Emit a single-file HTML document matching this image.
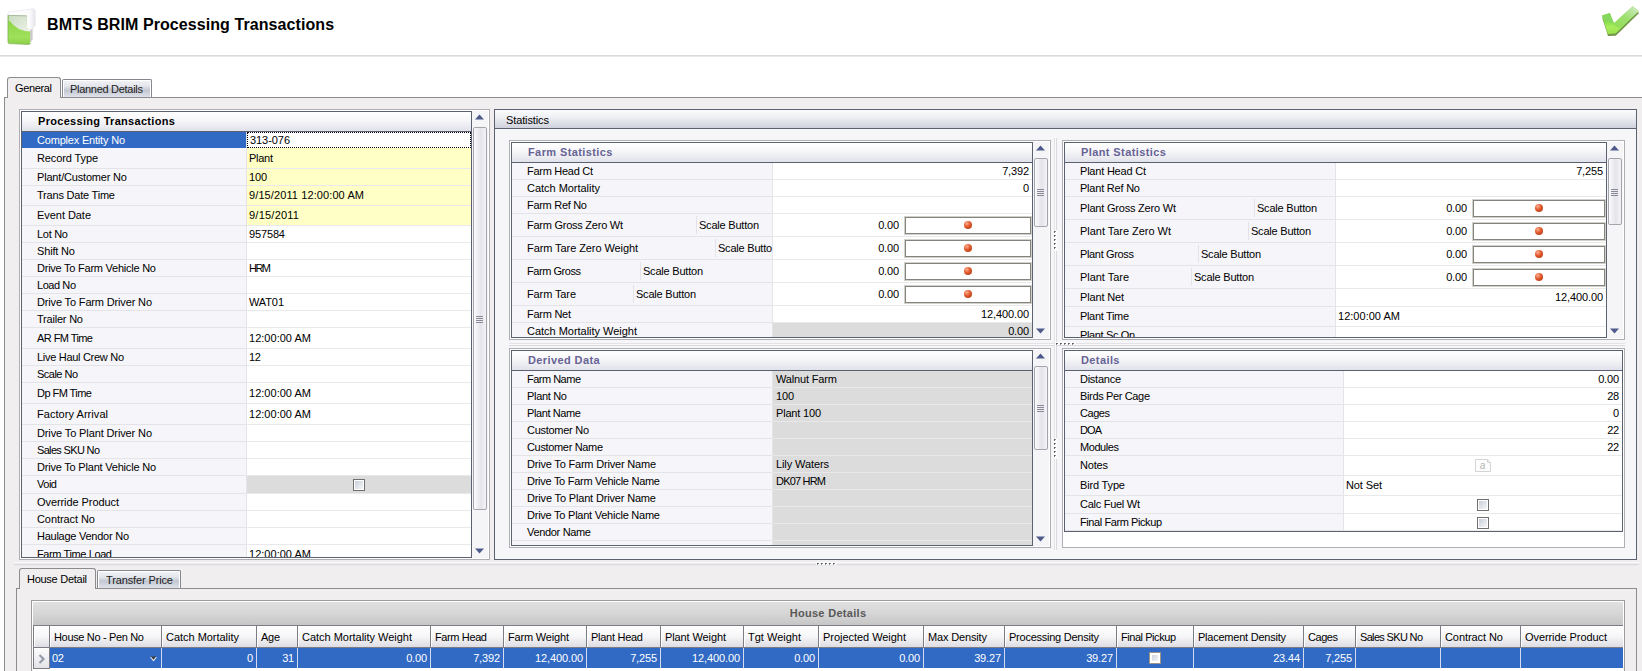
<!DOCTYPE html>
<html><head><meta charset="utf-8"><title>BMTS BRIM Processing Transactions</title>
<style>
html,body{margin:0;padding:0;background:#fff;}
body{width:1642px;height:671px;overflow:hidden;position:relative;font:11px "Liberation Sans",sans-serif;color:#000;}
div,svg{position:absolute;box-sizing:content-box;}
.t{white-space:nowrap;font:11px "Liberation Sans",sans-serif;letter-spacing:-0.2px;}
.b{font-weight:bold;}
</style></head><body>

<div class="t" style="left:47px;top:16px;height:22px;line-height:22px;font:bold 16px 'Liberation Sans',sans-serif;letter-spacing:0.08px">BMTS BRIM Processing Transactions</div>
<div style="left:0px;top:55px;width:1642px;height:1px;background:#dcdadc"></div>
<div style="left:0px;top:56px;width:1642px;height:1px;background:#ebeaeb"></div>
<svg style="left:0px;top:0px" width="50" height="52" viewBox="0 0 50 52">
<defs><linearGradient id="fg" x1="0" y1="0" x2="0" y2="1"><stop offset="0" stop-color="#86d23c"/><stop offset="0.75" stop-color="#9fe05c"/><stop offset="1" stop-color="#8ed048"/></linearGradient>
<linearGradient id="fgl" x1="0" y1="0" x2="1" y2="1"><stop offset="0" stop-color="#c9dcc0"/><stop offset="1" stop-color="#eef1ea"/></linearGradient>
<linearGradient id="fp" x1="0" y1="0" x2="1" y2="0"><stop offset="0" stop-color="#ffffff"/><stop offset="0.8" stop-color="#fbfbfc"/><stop offset="1" stop-color="#e6e4e8"/></linearGradient></defs>
<path d="M8 12.2 L32.5 8.8 Q35.2 8.8 35.2 11 L35.2 25.5 L32.8 28 L32.6 39.5 L30.5 42 L8 40 Z" fill="url(#fp)" stroke="#e9e7ec" stroke-width="0.8"/>
<path d="M30.2 30 L32.4 29 L32.3 39.6 L30.2 42.5 Z" fill="#c9c6cc"/>
<path d="M8 15.2 L26.8 15.8 L27 28 L30.2 31.4 L30.2 43 Q30.2 44.4 28.8 44.4 L9.3 43.6 Q8 43.5 8 42.2 Z" fill="url(#fg)"/>
<path d="M8.6 15.4 L26.8 15.9 L27 28 L30.2 31.6 Q16 30.5 10.2 21.2 L8.6 21 Z" fill="url(#fgl)"/>
<path d="M8 15.2 L8 42.2 Q8 43.5 9.3 43.6 L28.8 44.4 Q30.2 44.4 30.2 43" fill="none" stroke="#7fae55" stroke-width="0.9" opacity="0.8"/>
<path d="M8.2 15.3 L26.8 15.9" stroke="#aab0a6" stroke-width="0.8" fill="none"/>
</svg>
<svg style="left:1598px;top:4px" width="44" height="36" viewBox="0 0 44 36">
<defs><linearGradient id="cg" x1="0" y1="0" x2="0" y2="1"><stop offset="0" stop-color="#8fd95f"/><stop offset="0.55" stop-color="#86de48"/><stop offset="0.75" stop-color="#a8ee5c"/><stop offset="1" stop-color="#9be24c"/></linearGradient>
<linearGradient id="cg2" x1="1" y1="0" x2="0" y2="1"><stop offset="0" stop-color="#d4ecd0"/><stop offset="0.5" stop-color="#9fe070"/><stop offset="1" stop-color="#8fdc55"/></linearGradient></defs>
<path d="M4 11.6 L11.8 9.1 L15.9 19.2 L34.7 2.3 L40.9 7 L17.6 29.6 L9.8 29.9 Z" fill="#74954a" transform="translate(0.2,2.1)"/>
<path d="M4 11.6 L11.8 9.1 L15.9 19.2 L34.7 2.3 L40.9 7 L17.6 29.6 L9.8 29.9 Z" fill="url(#cg)"/>
<path d="M15.9 19.2 L34.7 2.3 L40.9 7 L22 24.5 Q18 23.5 15.9 19.2 Z" fill="url(#cg2)"/>
<path d="M4 11.6 L11.8 9.1 L15.9 19.2 Q9 19 5.2 15 Z" fill="#86d85c"/>
</svg>
<div style="left:4px;top:97px;width:1660px;height:600px;border:1px solid #8b8b90;background:#f0eeef;"></div>
<div style="left:7px;top:77px;width:52px;height:20px;border:1px solid #8b8b90;border-bottom:none;border-radius:3px 3px 0 0;background:#f0eeef;"></div>
<div class="t" style="left:15px;top:78px;height:20px;line-height:20px;letter-spacing:-0.357px;">General</div>
<div style="left:62px;top:79px;width:88px;height:17px;border:1px solid #85878f;border-bottom:none;border-radius:2px 2px 0 0;background:linear-gradient(#f2f3f6 0%,#e4e6ec 35%,#c3c7d2 60%,#dfe2e9 100%);box-shadow:inset 1px 1px 0 #fff,inset -1px 0 0 #fff;"></div>
<div class="t" style="left:70px;top:80px;height:18px;line-height:18px;letter-spacing:-0.290px;color:#222">Planned Details</div>
<div style="left:19px;top:109px;width:469px;height:449px;border:1px solid #aeaeb4;background:#fff;"></div>
<div style="left:21px;top:111px;width:449px;height:445px;border:1px solid #5b6171;overflow:hidden;background:#fff;">
<div style="left:0;top:0;width:449px;height:19px;background:linear-gradient(#ffffff 0%,#f6f6f9 45%,#e1e2ea 100%);border-bottom:1px solid #5b6171;"></div>
<div class="t b" style="left:16px;top:0;height:19px;line-height:19px;color:#000;letter-spacing:0.3px">Processing Transactions</div>
<div style="left:0;top:20px;width:224px;height:15px;background:#316ac5;border-bottom:1px solid #316ac5;"></div>
<div style="left:224px;top:20px;width:225px;height:15px;background:#fff;border-bottom:1px solid #e9e8eb;border-left:1px solid #e4e3e8;box-sizing:border-box;height:16px"></div>
<div class="t" style="left:15px;top:21px;height:15px;line-height:15px;color:#fff;letter-spacing:-0.193px;">Complex Entity No</div>
<div class="t" style="left:227px;top:21px;height:15px;line-height:15px;letter-spacing:-0.062px;">313-076</div>
<div style="left:225px;top:20px;width:222px;height:14px;border:1px dotted #000;background:#fff"></div>
<div class="t" style="left:228px;top:21px;height:15px;line-height:15px;letter-spacing:-0.062px;">313-076</div>
<div style="left:0;top:36px;width:224px;height:20px;background:#f6f5f9;border-bottom:1px solid #e4e3e8;"></div>
<div style="left:224px;top:36px;width:225px;height:20px;background:#ffffc6;border-bottom:1px solid #e9e8eb;border-left:1px solid #e4e3e8;box-sizing:border-box;height:21px"></div>
<div class="t" style="left:15px;top:36px;height:20px;line-height:20px;letter-spacing:-0.117px;">Record Type</div>
<div class="t" style="left:227px;top:36px;height:20px;line-height:20px;letter-spacing:-0.270px;">Plant</div>
<div style="left:0;top:57px;width:224px;height:16px;background:#f6f5f9;border-bottom:1px solid #e4e3e8;"></div>
<div style="left:224px;top:57px;width:225px;height:16px;background:#ffffc6;border-bottom:1px solid #e9e8eb;border-left:1px solid #e4e3e8;box-sizing:border-box;height:17px"></div>
<div class="t" style="left:15px;top:57px;height:16px;line-height:16px;letter-spacing:-0.184px;">Plant/Customer No</div>
<div class="t" style="left:227px;top:57px;height:16px;line-height:16px;letter-spacing:-0.180px;">100</div>
<div style="left:0;top:74px;width:224px;height:19px;background:#f6f5f9;border-bottom:1px solid #e4e3e8;"></div>
<div style="left:224px;top:74px;width:225px;height:19px;background:#ffffc6;border-bottom:1px solid #e9e8eb;border-left:1px solid #e4e3e8;box-sizing:border-box;height:20px"></div>
<div class="t" style="left:15px;top:74px;height:19px;line-height:19px;letter-spacing:-0.208px;">Trans Date Time</div>
<div class="t" style="left:227px;top:74px;height:19px;line-height:19px;letter-spacing:0.102px;">9/15/2011 12:00:00 AM</div>
<div style="left:0;top:94px;width:224px;height:19px;background:#f6f5f9;border-bottom:1px solid #e4e3e8;"></div>
<div style="left:224px;top:94px;width:225px;height:19px;background:#ffffc6;border-bottom:1px solid #e9e8eb;border-left:1px solid #e4e3e8;box-sizing:border-box;height:20px"></div>
<div class="t" style="left:15px;top:94px;height:19px;line-height:19px;letter-spacing:-0.047px;">Event Date</div>
<div class="t" style="left:227px;top:94px;height:19px;line-height:19px;letter-spacing:0.234px;">9/15/2011</div>
<div style="left:0;top:114px;width:224px;height:16px;background:#f6f5f9;border-bottom:1px solid #e4e3e8;"></div>
<div style="left:224px;top:114px;width:225px;height:16px;background:#fff;border-bottom:1px solid #e9e8eb;border-left:1px solid #e4e3e8;box-sizing:border-box;height:17px"></div>
<div class="t" style="left:15px;top:114px;height:16px;line-height:16px;letter-spacing:-0.284px;">Lot No</div>
<div class="t" style="left:227px;top:114px;height:16px;line-height:16px;letter-spacing:-0.144px;">957584</div>
<div style="left:0;top:131px;width:224px;height:16px;background:#f6f5f9;border-bottom:1px solid #e4e3e8;"></div>
<div style="left:224px;top:131px;width:225px;height:16px;background:#fff;border-bottom:1px solid #e9e8eb;border-left:1px solid #e4e3e8;box-sizing:border-box;height:17px"></div>
<div class="t" style="left:15px;top:131px;height:16px;line-height:16px;letter-spacing:-0.163px;">Shift No</div>
<div style="left:0;top:148px;width:224px;height:16px;background:#f6f5f9;border-bottom:1px solid #e4e3e8;"></div>
<div style="left:224px;top:148px;width:225px;height:16px;background:#fff;border-bottom:1px solid #e9e8eb;border-left:1px solid #e4e3e8;box-sizing:border-box;height:17px"></div>
<div class="t" style="left:15px;top:148px;height:16px;line-height:16px;letter-spacing:-0.240px;">Drive To Farm Vehicle No</div>
<div class="t" style="left:227px;top:148px;height:16px;line-height:16px;letter-spacing:-1.531px;">HRM</div>
<div style="left:0;top:165px;width:224px;height:16px;background:#f6f5f9;border-bottom:1px solid #e4e3e8;"></div>
<div style="left:224px;top:165px;width:225px;height:16px;background:#fff;border-bottom:1px solid #e9e8eb;border-left:1px solid #e4e3e8;box-sizing:border-box;height:17px"></div>
<div class="t" style="left:15px;top:165px;height:16px;line-height:16px;letter-spacing:-0.432px;">Load No</div>
<div style="left:0;top:182px;width:224px;height:16px;background:#f6f5f9;border-bottom:1px solid #e4e3e8;"></div>
<div style="left:224px;top:182px;width:225px;height:16px;background:#fff;border-bottom:1px solid #e9e8eb;border-left:1px solid #e4e3e8;box-sizing:border-box;height:17px"></div>
<div class="t" style="left:15px;top:182px;height:16px;line-height:16px;letter-spacing:-0.153px;">Drive To Farm Driver No</div>
<div class="t" style="left:227px;top:182px;height:16px;line-height:16px;letter-spacing:-0.113px;">WAT01</div>
<div style="left:0;top:199px;width:224px;height:16px;background:#f6f5f9;border-bottom:1px solid #e4e3e8;"></div>
<div style="left:224px;top:199px;width:225px;height:16px;background:#fff;border-bottom:1px solid #e9e8eb;border-left:1px solid #e4e3e8;box-sizing:border-box;height:17px"></div>
<div class="t" style="left:15px;top:199px;height:16px;line-height:16px;letter-spacing:-0.210px;">Trailer No</div>
<div style="left:0;top:216px;width:224px;height:20px;background:#f6f5f9;border-bottom:1px solid #e4e3e8;"></div>
<div style="left:224px;top:216px;width:225px;height:20px;background:#fff;border-bottom:1px solid #e9e8eb;border-left:1px solid #e4e3e8;box-sizing:border-box;height:21px"></div>
<div class="t" style="left:15px;top:216px;height:20px;line-height:20px;letter-spacing:-0.569px;">AR FM Time</div>
<div class="t" style="left:227px;top:216px;height:20px;line-height:20px;letter-spacing:0.022px;">12:00:00 AM</div>
<div style="left:0;top:237px;width:224px;height:16px;background:#f6f5f9;border-bottom:1px solid #e4e3e8;"></div>
<div style="left:224px;top:237px;width:225px;height:16px;background:#fff;border-bottom:1px solid #e9e8eb;border-left:1px solid #e4e3e8;box-sizing:border-box;height:17px"></div>
<div class="t" style="left:15px;top:237px;height:16px;line-height:16px;letter-spacing:-0.294px;">Live Haul Crew No</div>
<div class="t" style="left:227px;top:237px;height:16px;line-height:16px;letter-spacing:-0.250px;">12</div>
<div style="left:0;top:254px;width:224px;height:16px;background:#f6f5f9;border-bottom:1px solid #e4e3e8;"></div>
<div style="left:224px;top:254px;width:225px;height:16px;background:#fff;border-bottom:1px solid #e9e8eb;border-left:1px solid #e4e3e8;box-sizing:border-box;height:17px"></div>
<div class="t" style="left:15px;top:254px;height:16px;line-height:16px;letter-spacing:-0.520px;">Scale No</div>
<div style="left:0;top:271px;width:224px;height:20px;background:#f6f5f9;border-bottom:1px solid #e4e3e8;"></div>
<div style="left:224px;top:271px;width:225px;height:20px;background:#fff;border-bottom:1px solid #e9e8eb;border-left:1px solid #e4e3e8;box-sizing:border-box;height:21px"></div>
<div class="t" style="left:15px;top:271px;height:20px;line-height:20px;letter-spacing:-0.545px;">Dp FM Time</div>
<div class="t" style="left:227px;top:271px;height:20px;line-height:20px;letter-spacing:0.022px;">12:00:00 AM</div>
<div style="left:0;top:292px;width:224px;height:20px;background:#f6f5f9;border-bottom:1px solid #e4e3e8;"></div>
<div style="left:224px;top:292px;width:225px;height:20px;background:#fff;border-bottom:1px solid #e9e8eb;border-left:1px solid #e4e3e8;box-sizing:border-box;height:21px"></div>
<div class="t" style="left:15px;top:292px;height:20px;line-height:20px;letter-spacing:0.050px;">Factory Arrival</div>
<div class="t" style="left:227px;top:292px;height:20px;line-height:20px;letter-spacing:0.022px;">12:00:00 AM</div>
<div style="left:0;top:313px;width:224px;height:16px;background:#f6f5f9;border-bottom:1px solid #e4e3e8;"></div>
<div style="left:224px;top:313px;width:225px;height:16px;background:#fff;border-bottom:1px solid #e9e8eb;border-left:1px solid #e4e3e8;box-sizing:border-box;height:17px"></div>
<div class="t" style="left:15px;top:313px;height:16px;line-height:16px;letter-spacing:-0.121px;">Drive To Plant Driver No</div>
<div style="left:0;top:330px;width:224px;height:16px;background:#f6f5f9;border-bottom:1px solid #e4e3e8;"></div>
<div style="left:224px;top:330px;width:225px;height:16px;background:#fff;border-bottom:1px solid #e9e8eb;border-left:1px solid #e4e3e8;box-sizing:border-box;height:17px"></div>
<div class="t" style="left:15px;top:330px;height:16px;line-height:16px;letter-spacing:-0.665px;">Sales SKU No</div>
<div style="left:0;top:347px;width:224px;height:16px;background:#f6f5f9;border-bottom:1px solid #e4e3e8;"></div>
<div style="left:224px;top:347px;width:225px;height:16px;background:#fff;border-bottom:1px solid #e9e8eb;border-left:1px solid #e4e3e8;box-sizing:border-box;height:17px"></div>
<div class="t" style="left:15px;top:347px;height:16px;line-height:16px;letter-spacing:-0.205px;">Drive To Plant Vehicle No</div>
<div style="left:0;top:364px;width:224px;height:17px;background:#f6f5f9;border-bottom:1px solid #e4e3e8;"></div>
<div style="left:224px;top:364px;width:225px;height:17px;background:#dcdcdc;border-bottom:1px solid #e9e8eb;border-left:1px solid #e4e3e8;box-sizing:border-box;height:18px"></div>
<div class="t" style="left:15px;top:364px;height:17px;line-height:17px;letter-spacing:-0.474px;">Void</div>
<div style="left:331px;top:367px;width:10px;height:10px;border:1px solid #6f6f6f;background:linear-gradient(135deg,#c9ced9 10%,#f6f7f9 90%);box-shadow:inset 0 0 0 1px #fff;"></div>
<div style="left:0;top:382px;width:224px;height:16px;background:#f6f5f9;border-bottom:1px solid #e4e3e8;"></div>
<div style="left:224px;top:382px;width:225px;height:16px;background:#fff;border-bottom:1px solid #e9e8eb;border-left:1px solid #e4e3e8;box-sizing:border-box;height:17px"></div>
<div class="t" style="left:15px;top:382px;height:16px;line-height:16px;letter-spacing:-0.077px;">Override Product</div>
<div style="left:0;top:399px;width:224px;height:16px;background:#f6f5f9;border-bottom:1px solid #e4e3e8;"></div>
<div style="left:224px;top:399px;width:225px;height:16px;background:#fff;border-bottom:1px solid #e9e8eb;border-left:1px solid #e4e3e8;box-sizing:border-box;height:17px"></div>
<div class="t" style="left:15px;top:399px;height:16px;line-height:16px;letter-spacing:-0.070px;">Contract No</div>
<div style="left:0;top:416px;width:224px;height:16px;background:#f6f5f9;border-bottom:1px solid #e4e3e8;"></div>
<div style="left:224px;top:416px;width:225px;height:16px;background:#fff;border-bottom:1px solid #e9e8eb;border-left:1px solid #e4e3e8;box-sizing:border-box;height:17px"></div>
<div class="t" style="left:15px;top:416px;height:16px;line-height:16px;letter-spacing:-0.251px;">Haulage Vendor No</div>
<div style="left:0;top:433px;width:224px;height:19px;background:#f6f5f9;border-bottom:1px solid #e4e3e8;"></div>
<div style="left:224px;top:433px;width:225px;height:19px;background:#fff;border-bottom:1px solid #e9e8eb;border-left:1px solid #e4e3e8;box-sizing:border-box;height:20px"></div>
<div class="t" style="left:15px;top:433px;height:19px;line-height:19px;letter-spacing:-0.392px;">Farm Time Load</div>
<div class="t" style="left:227px;top:433px;height:19px;line-height:19px;letter-spacing:0.022px;">12:00:00 AM</div>
</div>
<div style="left:472px;top:111px;width:16px;height:447px;background:#f5f4f7;"></div>
<svg style="left:475px;top:114px" width="9" height="6" viewBox="0 0 9 6"><path d="M0 5.5 L4.5 0.6 L9 5.5 Z" fill="#4d5b8c"/></svg>
<svg style="left:475px;top:548px" width="9" height="6" viewBox="0 0 9 6"><path d="M0 0.5 L4.5 5.4 L9 0.5 Z" fill="#4d5b8c"/></svg>
<div style="left:473px;top:127px;width:12px;height:381px;border:1px solid #a4a4ac;border-radius:2px;background:linear-gradient(90deg,#fbfbfd 0%,#e4e4ea 55%,#f3f3f7 100%);"></div>
<div style="left:476px;top:316px;width:7px;height:1px;background:#8a8b98;"></div>
<div style="left:476px;top:318px;width:7px;height:1px;background:#8a8b98;"></div>
<div style="left:476px;top:320px;width:7px;height:1px;background:#8a8b98;"></div>
<div style="left:476px;top:322px;width:7px;height:1px;background:#8a8b98;"></div>
<div style="left:494px;top:109px;width:1141px;height:449px;border:1px solid #5b6171;background:#f6f5f8;"></div>
<div style="left:495px;top:110px;width:1141px;height:18px;background:linear-gradient(#fbfbfd 0%,#eff0f4 40%,#cfd2dc 100%);border-bottom:1px solid #5b6171;"></div>
<div class="t" style="left:506px;top:111px;height:18px;line-height:18px;letter-spacing:-0.113px;">Statistics</div>
<div style="left:509px;top:140px;width:540px;height:198px;border:1px solid #aeaeb4;background:#fff;"></div>
<div style="left:511px;top:142px;width:520px;height:194px;border:1px solid #5b6171;overflow:hidden;background:#fff;">
<div style="left:0;top:0;width:520px;height:19px;background:linear-gradient(#ffffff 0%,#f6f6f9 45%,#e1e2ea 100%);border-bottom:1px solid #5b6171;"></div>
<div class="t b" style="left:16px;top:0;height:19px;line-height:19px;color:#666394;letter-spacing:0.4px">Farm Statistics</div>
<div style="left:0;top:20px;width:260px;height:16px;background:#f6f5f9;border-bottom:1px solid #e4e3e8;"></div>
<div style="left:260px;top:20px;width:260px;height:16px;background:#fff;border-bottom:1px solid #e9e8eb;border-left:1px solid #e4e3e8;box-sizing:border-box;height:17px"></div>
<div class="t" style="left:15px;top:20px;height:16px;line-height:16px;letter-spacing:-0.280px;">Farm Head Ct</div>
<div class="t" style="right:3px;top:20px;height:16px;line-height:16px;letter-spacing:-0.133px;">7,392</div>
<div style="left:0;top:37px;width:260px;height:16px;background:#f6f5f9;border-bottom:1px solid #e4e3e8;"></div>
<div style="left:260px;top:37px;width:260px;height:16px;background:#fff;border-bottom:1px solid #e9e8eb;border-left:1px solid #e4e3e8;box-sizing:border-box;height:17px"></div>
<div class="t" style="left:15px;top:37px;height:16px;line-height:16px;letter-spacing:-0.026px;">Catch Mortality</div>
<div class="t" style="right:3px;top:37px;height:16px;line-height:16px;letter-spacing:0;">0</div>
<div style="left:0;top:54px;width:260px;height:16px;background:#f6f5f9;border-bottom:1px solid #e4e3e8;"></div>
<div style="left:260px;top:54px;width:260px;height:16px;background:#fff;border-bottom:1px solid #e9e8eb;border-left:1px solid #e4e3e8;box-sizing:border-box;height:17px"></div>
<div class="t" style="left:15px;top:54px;height:16px;line-height:16px;letter-spacing:-0.297px;">Farm Ref No</div>
<div style="left:0;top:71px;width:260px;height:22px;background:#f6f5f9;border-bottom:1px solid #e4e3e8;"></div>
<div style="left:260px;top:71px;width:260px;height:22px;background:#fff;border-bottom:1px solid #e9e8eb;border-left:1px solid #e4e3e8;box-sizing:border-box;height:23px"></div>
<div class="t" style="left:15px;top:71px;height:22px;line-height:22px;letter-spacing:-0.249px;">Farm Gross Zero Wt</div>
<div style="left:184px;top:73px;width:1px;height:18px;background:#e4e3e8"></div>
<div class="t" style="left:187px;top:71px;height:22px;line-height:22px;width:73px;overflow:hidden;white-space:nowrap;letter-spacing:-0.216px;">Scale Button</div>
<div class="t" style="left:347px;width:40px;text-align:right;top:71px;height:22px;line-height:22px;letter-spacing:-0.141px;">0.00</div>
<div style="left:392px;top:73px;width:124px;height:15px;border:1px solid #d3d1cc;padding:1px;margin:0;background:#fff;box-shadow:inset 0 0 0 1px #85837e"></div>
<div style="left:452px;top:78px;width:8px;height:8px;border-radius:50%;background:radial-gradient(circle at 35% 30%,#ffb090 0%,#e0562a 45%,#a63a16 100%);"></div>
<div style="left:0;top:94px;width:260px;height:22px;background:#f6f5f9;border-bottom:1px solid #e4e3e8;"></div>
<div style="left:260px;top:94px;width:260px;height:22px;background:#fff;border-bottom:1px solid #e9e8eb;border-left:1px solid #e4e3e8;box-sizing:border-box;height:23px"></div>
<div class="t" style="left:15px;top:94px;height:22px;line-height:22px;letter-spacing:-0.084px;">Farm Tare Zero Weight</div>
<div style="left:203px;top:96px;width:1px;height:18px;background:#e4e3e8"></div>
<div class="t" style="left:206px;top:94px;height:22px;line-height:22px;width:54px;overflow:hidden;white-space:nowrap;letter-spacing:-0.216px;">Scale Button</div>
<div class="t" style="left:347px;width:40px;text-align:right;top:94px;height:22px;line-height:22px;letter-spacing:-0.141px;">0.00</div>
<div style="left:392px;top:96px;width:124px;height:15px;border:1px solid #d3d1cc;padding:1px;margin:0;background:#fff;box-shadow:inset 0 0 0 1px #85837e"></div>
<div style="left:452px;top:101px;width:8px;height:8px;border-radius:50%;background:radial-gradient(circle at 35% 30%,#ffb090 0%,#e0562a 45%,#a63a16 100%);"></div>
<div style="left:0;top:117px;width:260px;height:22px;background:#f6f5f9;border-bottom:1px solid #e4e3e8;"></div>
<div style="left:260px;top:117px;width:260px;height:22px;background:#fff;border-bottom:1px solid #e9e8eb;border-left:1px solid #e4e3e8;box-sizing:border-box;height:23px"></div>
<div class="t" style="left:15px;top:117px;height:22px;line-height:22px;letter-spacing:-0.451px;">Farm Gross</div>
<div style="left:128px;top:119px;width:1px;height:18px;background:#e4e3e8"></div>
<div class="t" style="left:131px;top:117px;height:22px;line-height:22px;width:129px;overflow:hidden;white-space:nowrap;letter-spacing:-0.216px;">Scale Button</div>
<div class="t" style="left:347px;width:40px;text-align:right;top:117px;height:22px;line-height:22px;letter-spacing:-0.141px;">0.00</div>
<div style="left:392px;top:119px;width:124px;height:15px;border:1px solid #d3d1cc;padding:1px;margin:0;background:#fff;box-shadow:inset 0 0 0 1px #85837e"></div>
<div style="left:452px;top:124px;width:8px;height:8px;border-radius:50%;background:radial-gradient(circle at 35% 30%,#ffb090 0%,#e0562a 45%,#a63a16 100%);"></div>
<div style="left:0;top:140px;width:260px;height:22px;background:#f6f5f9;border-bottom:1px solid #e4e3e8;"></div>
<div style="left:260px;top:140px;width:260px;height:22px;background:#fff;border-bottom:1px solid #e9e8eb;border-left:1px solid #e4e3e8;box-sizing:border-box;height:23px"></div>
<div class="t" style="left:15px;top:140px;height:22px;line-height:22px;letter-spacing:-0.115px;">Farm Tare</div>
<div style="left:121px;top:142px;width:1px;height:18px;background:#e4e3e8"></div>
<div class="t" style="left:124px;top:140px;height:22px;line-height:22px;width:136px;overflow:hidden;white-space:nowrap;letter-spacing:-0.216px;">Scale Button</div>
<div class="t" style="left:347px;width:40px;text-align:right;top:140px;height:22px;line-height:22px;letter-spacing:-0.141px;">0.00</div>
<div style="left:392px;top:142px;width:124px;height:15px;border:1px solid #d3d1cc;padding:1px;margin:0;background:#fff;box-shadow:inset 0 0 0 1px #85837e"></div>
<div style="left:452px;top:147px;width:8px;height:8px;border-radius:50%;background:radial-gradient(circle at 35% 30%,#ffb090 0%,#e0562a 45%,#a63a16 100%);"></div>
<div style="left:0;top:163px;width:260px;height:16px;background:#f6f5f9;border-bottom:1px solid #e4e3e8;"></div>
<div style="left:260px;top:163px;width:260px;height:16px;background:#fff;border-bottom:1px solid #e9e8eb;border-left:1px solid #e4e3e8;box-sizing:border-box;height:17px"></div>
<div class="t" style="left:15px;top:163px;height:16px;line-height:16px;letter-spacing:-0.263px;">Farm Net</div>
<div class="t" style="right:3px;top:163px;height:16px;line-height:16px;letter-spacing:-0.117px;">12,400.00</div>
<div style="left:0;top:180px;width:260px;height:16px;background:#f6f5f9;border-bottom:1px solid #e4e3e8;"></div>
<div style="left:260px;top:180px;width:260px;height:16px;background:#dcdcdc;border-bottom:1px solid #e9e8eb;border-left:1px solid #e4e3e8;box-sizing:border-box;height:17px"></div>
<div class="t" style="left:15px;top:180px;height:16px;line-height:16px;letter-spacing:-0.022px;">Catch Mortality Weight</div>
<div class="t" style="right:3px;top:180px;height:16px;line-height:16px;letter-spacing:-0.141px;">0.00</div>
</div>
<div style="left:1033px;top:142px;width:16px;height:196px;background:#f5f4f7;"></div>
<svg style="left:1036px;top:145px" width="9" height="6" viewBox="0 0 9 6"><path d="M0 5.5 L4.5 0.6 L9 5.5 Z" fill="#4d5b8c"/></svg>
<svg style="left:1036px;top:328px" width="9" height="6" viewBox="0 0 9 6"><path d="M0 0.5 L4.5 5.4 L9 0.5 Z" fill="#4d5b8c"/></svg>
<div style="left:1034px;top:158px;width:12px;height:67px;border:1px solid #a4a4ac;border-radius:2px;background:linear-gradient(90deg,#fbfbfd 0%,#e4e4ea 55%,#f3f3f7 100%);"></div>
<div style="left:1037px;top:189px;width:7px;height:1px;background:#8a8b98;"></div>
<div style="left:1037px;top:191px;width:7px;height:1px;background:#8a8b98;"></div>
<div style="left:1037px;top:193px;width:7px;height:1px;background:#8a8b98;"></div>
<div style="left:1037px;top:195px;width:7px;height:1px;background:#8a8b98;"></div>
<div style="left:1062px;top:140px;width:561px;height:198px;border:1px solid #aeaeb4;background:#fff;"></div>
<div style="left:1064px;top:142px;width:541px;height:194px;border:1px solid #5b6171;overflow:hidden;background:#fff;">
<div style="left:0;top:0;width:541px;height:19px;background:linear-gradient(#ffffff 0%,#f6f6f9 45%,#e1e2ea 100%);border-bottom:1px solid #5b6171;"></div>
<div class="t b" style="left:16px;top:0;height:19px;line-height:19px;color:#666394;letter-spacing:0.4px">Plant Statistics</div>
<div style="left:0;top:20px;width:270px;height:16px;background:#f6f5f9;border-bottom:1px solid #e4e3e8;"></div>
<div style="left:270px;top:20px;width:271px;height:16px;background:#fff;border-bottom:1px solid #e9e8eb;border-left:1px solid #e4e3e8;box-sizing:border-box;height:17px"></div>
<div class="t" style="left:15px;top:20px;height:16px;line-height:16px;letter-spacing:-0.207px;">Plant Head Ct</div>
<div class="t" style="right:3px;top:20px;height:16px;line-height:16px;letter-spacing:-0.133px;">7,255</div>
<div style="left:0;top:37px;width:270px;height:16px;background:#f6f5f9;border-bottom:1px solid #e4e3e8;"></div>
<div style="left:270px;top:37px;width:271px;height:16px;background:#fff;border-bottom:1px solid #e9e8eb;border-left:1px solid #e4e3e8;box-sizing:border-box;height:17px"></div>
<div class="t" style="left:15px;top:37px;height:16px;line-height:16px;letter-spacing:-0.216px;">Plant Ref No</div>
<div style="left:0;top:54px;width:270px;height:22px;background:#f6f5f9;border-bottom:1px solid #e4e3e8;"></div>
<div style="left:270px;top:54px;width:271px;height:22px;background:#fff;border-bottom:1px solid #e9e8eb;border-left:1px solid #e4e3e8;box-sizing:border-box;height:23px"></div>
<div class="t" style="left:15px;top:54px;height:22px;line-height:22px;letter-spacing:-0.202px;">Plant Gross Zero Wt</div>
<div style="left:189px;top:56px;width:1px;height:18px;background:#e4e3e8"></div>
<div class="t" style="left:192px;top:54px;height:22px;line-height:22px;width:78px;overflow:hidden;white-space:nowrap;letter-spacing:-0.216px;">Scale Button</div>
<div class="t" style="left:362px;width:40px;text-align:right;top:54px;height:22px;line-height:22px;letter-spacing:-0.141px;">0.00</div>
<div style="left:407px;top:56px;width:130px;height:15px;border:1px solid #d3d1cc;padding:1px;margin:0;background:#fff;box-shadow:inset 0 0 0 1px #85837e"></div>
<div style="left:470px;top:61px;width:8px;height:8px;border-radius:50%;background:radial-gradient(circle at 35% 30%,#ffb090 0%,#e0562a 45%,#a63a16 100%);"></div>
<div style="left:0;top:77px;width:270px;height:22px;background:#f6f5f9;border-bottom:1px solid #e4e3e8;"></div>
<div style="left:270px;top:77px;width:271px;height:22px;background:#fff;border-bottom:1px solid #e9e8eb;border-left:1px solid #e4e3e8;box-sizing:border-box;height:23px"></div>
<div class="t" style="left:15px;top:77px;height:22px;line-height:22px;letter-spacing:-0.029px;">Plant Tare Zero Wt</div>
<div style="left:183px;top:79px;width:1px;height:18px;background:#e4e3e8"></div>
<div class="t" style="left:186px;top:77px;height:22px;line-height:22px;width:84px;overflow:hidden;white-space:nowrap;letter-spacing:-0.216px;">Scale Button</div>
<div class="t" style="left:362px;width:40px;text-align:right;top:77px;height:22px;line-height:22px;letter-spacing:-0.141px;">0.00</div>
<div style="left:407px;top:79px;width:130px;height:15px;border:1px solid #d3d1cc;padding:1px;margin:0;background:#fff;box-shadow:inset 0 0 0 1px #85837e"></div>
<div style="left:470px;top:84px;width:8px;height:8px;border-radius:50%;background:radial-gradient(circle at 35% 30%,#ffb090 0%,#e0562a 45%,#a63a16 100%);"></div>
<div style="left:0;top:100px;width:270px;height:22px;background:#f6f5f9;border-bottom:1px solid #e4e3e8;"></div>
<div style="left:270px;top:100px;width:271px;height:22px;background:#fff;border-bottom:1px solid #e9e8eb;border-left:1px solid #e4e3e8;box-sizing:border-box;height:23px"></div>
<div class="t" style="left:15px;top:100px;height:22px;line-height:22px;letter-spacing:-0.347px;">Plant Gross</div>
<div style="left:133px;top:102px;width:1px;height:18px;background:#e4e3e8"></div>
<div class="t" style="left:136px;top:100px;height:22px;line-height:22px;width:134px;overflow:hidden;white-space:nowrap;letter-spacing:-0.216px;">Scale Button</div>
<div class="t" style="left:362px;width:40px;text-align:right;top:100px;height:22px;line-height:22px;letter-spacing:-0.141px;">0.00</div>
<div style="left:407px;top:102px;width:130px;height:15px;border:1px solid #d3d1cc;padding:1px;margin:0;background:#fff;box-shadow:inset 0 0 0 1px #85837e"></div>
<div style="left:470px;top:107px;width:8px;height:8px;border-radius:50%;background:radial-gradient(circle at 35% 30%,#ffb090 0%,#e0562a 45%,#a63a16 100%);"></div>
<div style="left:0;top:123px;width:270px;height:22px;background:#f6f5f9;border-bottom:1px solid #e4e3e8;"></div>
<div style="left:270px;top:123px;width:271px;height:22px;background:#fff;border-bottom:1px solid #e9e8eb;border-left:1px solid #e4e3e8;box-sizing:border-box;height:23px"></div>
<div class="t" style="left:15px;top:123px;height:22px;line-height:22px;letter-spacing:-0.036px;">Plant Tare</div>
<div style="left:126px;top:125px;width:1px;height:18px;background:#e4e3e8"></div>
<div class="t" style="left:129px;top:123px;height:22px;line-height:22px;width:141px;overflow:hidden;white-space:nowrap;letter-spacing:-0.216px;">Scale Button</div>
<div class="t" style="left:362px;width:40px;text-align:right;top:123px;height:22px;line-height:22px;letter-spacing:-0.141px;">0.00</div>
<div style="left:407px;top:125px;width:130px;height:15px;border:1px solid #d3d1cc;padding:1px;margin:0;background:#fff;box-shadow:inset 0 0 0 1px #85837e"></div>
<div style="left:470px;top:130px;width:8px;height:8px;border-radius:50%;background:radial-gradient(circle at 35% 30%,#ffb090 0%,#e0562a 45%,#a63a16 100%);"></div>
<div style="left:0;top:146px;width:270px;height:17px;background:#f6f5f9;border-bottom:1px solid #e4e3e8;"></div>
<div style="left:270px;top:146px;width:271px;height:17px;background:#fff;border-bottom:1px solid #e9e8eb;border-left:1px solid #e4e3e8;box-sizing:border-box;height:18px"></div>
<div class="t" style="left:15px;top:146px;height:17px;line-height:17px;letter-spacing:-0.156px;">Plant Net</div>
<div class="t" style="right:3px;top:146px;height:17px;line-height:17px;letter-spacing:-0.117px;">12,400.00</div>
<div style="left:0;top:164px;width:270px;height:19px;background:#f6f5f9;border-bottom:1px solid #e4e3e8;"></div>
<div style="left:270px;top:164px;width:271px;height:19px;background:#fff;border-bottom:1px solid #e9e8eb;border-left:1px solid #e4e3e8;box-sizing:border-box;height:20px"></div>
<div class="t" style="left:15px;top:164px;height:19px;line-height:19px;letter-spacing:-0.330px;">Plant Time</div>
<div class="t" style="left:273px;top:164px;height:19px;line-height:19px;letter-spacing:0.022px;">12:00:00 AM</div>
<div style="left:0;top:184px;width:270px;height:17px;background:#f6f5f9;border-bottom:1px solid #e4e3e8;"></div>
<div style="left:270px;top:184px;width:271px;height:17px;background:#fff;border-bottom:1px solid #e9e8eb;border-left:1px solid #e4e3e8;box-sizing:border-box;height:18px"></div>
<div class="t" style="left:15px;top:184px;height:17px;line-height:17px;letter-spacing:-0.370px;">Plant Sc On</div>
</div>
<div style="left:1607px;top:142px;width:16px;height:196px;background:#f5f4f7;"></div>
<svg style="left:1610px;top:145px" width="9" height="6" viewBox="0 0 9 6"><path d="M0 5.5 L4.5 0.6 L9 5.5 Z" fill="#4d5b8c"/></svg>
<svg style="left:1610px;top:328px" width="9" height="6" viewBox="0 0 9 6"><path d="M0 0.5 L4.5 5.4 L9 0.5 Z" fill="#4d5b8c"/></svg>
<div style="left:1608px;top:158px;width:12px;height:65px;border:1px solid #a4a4ac;border-radius:2px;background:linear-gradient(90deg,#fbfbfd 0%,#e4e4ea 55%,#f3f3f7 100%);"></div>
<div style="left:1611px;top:189px;width:7px;height:1px;background:#8a8b98;"></div>
<div style="left:1611px;top:191px;width:7px;height:1px;background:#8a8b98;"></div>
<div style="left:1611px;top:193px;width:7px;height:1px;background:#8a8b98;"></div>
<div style="left:1611px;top:195px;width:7px;height:1px;background:#8a8b98;"></div>
<div style="left:509px;top:348px;width:540px;height:198px;border:1px solid #aeaeb4;background:#fff;"></div>
<div style="left:511px;top:350px;width:520px;height:194px;border:1px solid #5b6171;overflow:hidden;background:#fff;">
<div style="left:0;top:0;width:520px;height:19px;background:linear-gradient(#ffffff 0%,#f6f6f9 45%,#e1e2ea 100%);border-bottom:1px solid #5b6171;"></div>
<div class="t b" style="left:16px;top:0;height:19px;line-height:19px;color:#666394;letter-spacing:0.4px">Derived Data</div>
<div style="left:0;top:20px;width:260px;height:16px;background:#f6f5f9;border-bottom:1px solid #e4e3e8;"></div>
<div style="left:260px;top:20px;width:260px;height:16px;background:#dcdcdc;border-bottom:1px solid #e8e8ea;border-left:1px solid #e4e3e8;box-sizing:border-box;height:17px"></div>
<div class="t" style="left:15px;top:20px;height:16px;line-height:16px;letter-spacing:-0.508px;">Farm Name</div>
<div class="t" style="left:264px;top:20px;height:16px;line-height:16px;letter-spacing:-0.155px;">Walnut Farm</div>
<div style="left:0;top:37px;width:260px;height:16px;background:#f6f5f9;border-bottom:1px solid #e4e3e8;"></div>
<div style="left:260px;top:37px;width:260px;height:16px;background:#dcdcdc;border-bottom:1px solid #e8e8ea;border-left:1px solid #e4e3e8;box-sizing:border-box;height:17px"></div>
<div class="t" style="left:15px;top:37px;height:16px;line-height:16px;letter-spacing:-0.315px;">Plant No</div>
<div class="t" style="left:264px;top:37px;height:16px;line-height:16px;letter-spacing:-0.180px;">100</div>
<div style="left:0;top:54px;width:260px;height:16px;background:#f6f5f9;border-bottom:1px solid #e4e3e8;"></div>
<div style="left:260px;top:54px;width:260px;height:16px;background:#dcdcdc;border-bottom:1px solid #e8e8ea;border-left:1px solid #e4e3e8;box-sizing:border-box;height:17px"></div>
<div class="t" style="left:15px;top:54px;height:16px;line-height:16px;letter-spacing:-0.387px;">Plant Name</div>
<div class="t" style="left:264px;top:54px;height:16px;line-height:16px;letter-spacing:-0.186px;">Plant 100</div>
<div style="left:0;top:71px;width:260px;height:16px;background:#f6f5f9;border-bottom:1px solid #e4e3e8;"></div>
<div style="left:260px;top:71px;width:260px;height:16px;background:#dcdcdc;border-bottom:1px solid #e8e8ea;border-left:1px solid #e4e3e8;box-sizing:border-box;height:17px"></div>
<div class="t" style="left:15px;top:71px;height:16px;line-height:16px;letter-spacing:-0.280px;">Customer No</div>
<div style="left:0;top:88px;width:260px;height:16px;background:#f6f5f9;border-bottom:1px solid #e4e3e8;"></div>
<div style="left:260px;top:88px;width:260px;height:16px;background:#dcdcdc;border-bottom:1px solid #e8e8ea;border-left:1px solid #e4e3e8;box-sizing:border-box;height:17px"></div>
<div class="t" style="left:15px;top:88px;height:16px;line-height:16px;letter-spacing:-0.340px;">Customer Name</div>
<div style="left:0;top:105px;width:260px;height:16px;background:#f6f5f9;border-bottom:1px solid #e4e3e8;"></div>
<div style="left:260px;top:105px;width:260px;height:16px;background:#dcdcdc;border-bottom:1px solid #e8e8ea;border-left:1px solid #e4e3e8;box-sizing:border-box;height:17px"></div>
<div class="t" style="left:15px;top:105px;height:16px;line-height:16px;letter-spacing:-0.194px;">Drive To Farm Driver Name</div>
<div class="t" style="left:264px;top:105px;height:16px;line-height:16px;letter-spacing:-0.100px;">Lily Waters</div>
<div style="left:0;top:122px;width:260px;height:16px;background:#f6f5f9;border-bottom:1px solid #e4e3e8;"></div>
<div style="left:260px;top:122px;width:260px;height:16px;background:#dcdcdc;border-bottom:1px solid #e8e8ea;border-left:1px solid #e4e3e8;box-sizing:border-box;height:17px"></div>
<div class="t" style="left:15px;top:122px;height:16px;line-height:16px;letter-spacing:-0.272px;">Drive To Farm Vehicle Name</div>
<div class="t" style="left:264px;top:122px;height:16px;line-height:16px;letter-spacing:-0.804px;">DK07 HRM</div>
<div style="left:0;top:139px;width:260px;height:16px;background:#f6f5f9;border-bottom:1px solid #e4e3e8;"></div>
<div style="left:260px;top:139px;width:260px;height:16px;background:#dcdcdc;border-bottom:1px solid #e8e8ea;border-left:1px solid #e4e3e8;box-sizing:border-box;height:17px"></div>
<div class="t" style="left:15px;top:139px;height:16px;line-height:16px;letter-spacing:-0.163px;">Drive To Plant Driver Name</div>
<div style="left:0;top:156px;width:260px;height:16px;background:#f6f5f9;border-bottom:1px solid #e4e3e8;"></div>
<div style="left:260px;top:156px;width:260px;height:16px;background:#dcdcdc;border-bottom:1px solid #e8e8ea;border-left:1px solid #e4e3e8;box-sizing:border-box;height:17px"></div>
<div class="t" style="left:15px;top:156px;height:16px;line-height:16px;letter-spacing:-0.239px;">Drive To Plant Vehicle Name</div>
<div style="left:0;top:173px;width:260px;height:16px;background:#f6f5f9;border-bottom:1px solid #e4e3e8;"></div>
<div style="left:260px;top:173px;width:260px;height:16px;background:#dcdcdc;border-bottom:1px solid #e8e8ea;border-left:1px solid #e4e3e8;box-sizing:border-box;height:17px"></div>
<div class="t" style="left:15px;top:173px;height:16px;line-height:16px;letter-spacing:-0.327px;">Vendor Name</div>
<div style="left:0;top:190px;width:260px;height:16px;background:#f6f5f9;border-bottom:1px solid #e4e3e8;"></div>
<div style="left:260px;top:190px;width:260px;height:16px;background:#dcdcdc;border-bottom:1px solid #e8e8ea;border-left:1px solid #e4e3e8;box-sizing:border-box;height:17px"></div>
<div class="t" style="left:15px;top:190px;height:16px;line-height:16px;letter-spacing:0;"></div>
</div>
<div style="left:1033px;top:350px;width:16px;height:196px;background:#f5f4f7;"></div>
<svg style="left:1036px;top:353px" width="9" height="6" viewBox="0 0 9 6"><path d="M0 5.5 L4.5 0.6 L9 5.5 Z" fill="#4d5b8c"/></svg>
<svg style="left:1036px;top:536px" width="9" height="6" viewBox="0 0 9 6"><path d="M0 0.5 L4.5 5.4 L9 0.5 Z" fill="#4d5b8c"/></svg>
<div style="left:1034px;top:366px;width:12px;height:82px;border:1px solid #a4a4ac;border-radius:2px;background:linear-gradient(90deg,#fbfbfd 0%,#e4e4ea 55%,#f3f3f7 100%);"></div>
<div style="left:1037px;top:405px;width:7px;height:1px;background:#8a8b98;"></div>
<div style="left:1037px;top:407px;width:7px;height:1px;background:#8a8b98;"></div>
<div style="left:1037px;top:409px;width:7px;height:1px;background:#8a8b98;"></div>
<div style="left:1037px;top:411px;width:7px;height:1px;background:#8a8b98;"></div>
<div style="left:1062px;top:348px;width:561px;height:198px;border:1px solid #aeaeb4;background:#fff;"></div>
<div style="left:1064px;top:350px;width:557px;height:180px;border:1px solid #5b6171;overflow:hidden;background:#fff;">
<div style="left:0;top:0;width:557px;height:19px;background:linear-gradient(#ffffff 0%,#f6f6f9 45%,#e1e2ea 100%);border-bottom:1px solid #5b6171;"></div>
<div class="t b" style="left:16px;top:0;height:19px;line-height:19px;color:#666394;letter-spacing:0.4px">Details</div>
<div style="left:0;top:20px;width:278px;height:16px;background:#f6f5f9;border-bottom:1px solid #e4e3e8;"></div>
<div style="left:278px;top:20px;width:279px;height:16px;background:#fff;border-bottom:1px solid #e9e8eb;border-left:1px solid #e4e3e8;box-sizing:border-box;height:17px"></div>
<div class="t" style="left:15px;top:20px;height:16px;line-height:16px;letter-spacing:-0.257px;">Distance</div>
<div class="t" style="right:3px;top:20px;height:16px;line-height:16px;letter-spacing:-0.141px;">0.00</div>
<div style="left:0;top:37px;width:278px;height:16px;background:#f6f5f9;border-bottom:1px solid #e4e3e8;"></div>
<div style="left:278px;top:37px;width:279px;height:16px;background:#fff;border-bottom:1px solid #e9e8eb;border-left:1px solid #e4e3e8;box-sizing:border-box;height:17px"></div>
<div class="t" style="left:15px;top:37px;height:16px;line-height:16px;letter-spacing:-0.353px;">Birds Per Cage</div>
<div class="t" style="right:3px;top:37px;height:16px;line-height:16px;letter-spacing:-0.250px;">28</div>
<div style="left:0;top:54px;width:278px;height:16px;background:#f6f5f9;border-bottom:1px solid #e4e3e8;"></div>
<div style="left:278px;top:54px;width:279px;height:16px;background:#fff;border-bottom:1px solid #e9e8eb;border-left:1px solid #e4e3e8;box-sizing:border-box;height:17px"></div>
<div class="t" style="left:15px;top:54px;height:16px;line-height:16px;letter-spacing:-0.449px;">Cages</div>
<div class="t" style="right:3px;top:54px;height:16px;line-height:16px;letter-spacing:0;">0</div>
<div style="left:0;top:71px;width:278px;height:16px;background:#f6f5f9;border-bottom:1px solid #e4e3e8;"></div>
<div style="left:278px;top:71px;width:279px;height:16px;background:#fff;border-bottom:1px solid #e9e8eb;border-left:1px solid #e4e3e8;box-sizing:border-box;height:17px"></div>
<div class="t" style="left:15px;top:71px;height:16px;line-height:16px;letter-spacing:-0.922px;">DOA</div>
<div class="t" style="right:3px;top:71px;height:16px;line-height:16px;letter-spacing:-0.250px;">22</div>
<div style="left:0;top:88px;width:278px;height:16px;background:#f6f5f9;border-bottom:1px solid #e4e3e8;"></div>
<div style="left:278px;top:88px;width:279px;height:16px;background:#fff;border-bottom:1px solid #e9e8eb;border-left:1px solid #e4e3e8;box-sizing:border-box;height:17px"></div>
<div class="t" style="left:15px;top:88px;height:16px;line-height:16px;letter-spacing:-0.430px;">Modules</div>
<div class="t" style="right:3px;top:88px;height:16px;line-height:16px;letter-spacing:-0.250px;">22</div>
<div style="left:0;top:105px;width:278px;height:19px;background:#f6f5f9;border-bottom:1px solid #e4e3e8;"></div>
<div style="left:278px;top:105px;width:279px;height:19px;background:#fff;border-bottom:1px solid #e9e8eb;border-left:1px solid #e4e3e8;box-sizing:border-box;height:20px"></div>
<div class="t" style="left:15px;top:105px;height:19px;line-height:19px;letter-spacing:-0.188px;">Notes</div>
<svg style="left:410px;top:108px" width="16" height="13" viewBox="0 0 16 13"><path d="M0.5 0.5 H12.5 L15.5 3.5 V12.5 H0.5 Z" fill="#fdfdfd" stroke="#d4d4d4"/><path d="M12.5 0.5 V3.5 H15.5" fill="none" stroke="#d4d4d4"/><text x="7.5" y="10" text-anchor="middle" font-family="Liberation Sans, sans-serif" font-style="italic" font-size="10" fill="#b4b4b4">a</text></svg>
<div style="left:0;top:125px;width:278px;height:19px;background:#f6f5f9;border-bottom:1px solid #e4e3e8;"></div>
<div style="left:278px;top:125px;width:279px;height:19px;background:#fff;border-bottom:1px solid #e9e8eb;border-left:1px solid #e4e3e8;box-sizing:border-box;height:20px"></div>
<div class="t" style="left:15px;top:125px;height:19px;line-height:19px;letter-spacing:-0.160px;">Bird Type</div>
<div class="t" style="left:281px;top:125px;height:19px;line-height:19px;letter-spacing:-0.115px;">Not Set</div>
<div style="left:0;top:145px;width:278px;height:17px;background:#f6f5f9;border-bottom:1px solid #e4e3e8;"></div>
<div style="left:278px;top:145px;width:279px;height:17px;background:#fff;border-bottom:1px solid #e9e8eb;border-left:1px solid #e4e3e8;box-sizing:border-box;height:18px"></div>
<div class="t" style="left:15px;top:145px;height:17px;line-height:17px;letter-spacing:-0.270px;">Calc Fuel Wt</div>
<div style="left:412px;top:148px;width:10px;height:10px;border:1px solid #6f6f6f;background:linear-gradient(135deg,#c9ced9 10%,#f6f7f9 90%);box-shadow:inset 0 0 0 1px #fff;"></div>
<div style="left:0;top:163px;width:278px;height:16px;background:#f6f5f9;border-bottom:1px solid #e4e3e8;"></div>
<div style="left:278px;top:163px;width:279px;height:16px;background:#fff;border-bottom:1px solid #e9e8eb;border-left:1px solid #e4e3e8;box-sizing:border-box;height:17px"></div>
<div class="t" style="left:15px;top:163px;height:16px;line-height:16px;letter-spacing:-0.415px;">Final Farm Pickup</div>
<div style="left:412px;top:166px;width:10px;height:10px;border:1px solid #6f6f6f;background:linear-gradient(135deg,#c9ced9 10%,#f6f7f9 90%);box-shadow:inset 0 0 0 1px #fff;"></div>
</div>
<div style="left:1054px;top:138px;width:1px;height:412px;background:#e3e2e7"></div>
<div style="left:509px;top:343px;width:1116px;height:1px;background:#e3e2e7"></div>
<div style="left:1055px;top:138px;width:1px;height:412px;background:#fafafb"></div>
<div style="left:509px;top:344px;width:1116px;height:1px;background:#fafafb"></div>
<div style="left:1056px;top:138px;width:1px;height:412px;background:#dad9df"></div>
<div style="left:509px;top:345px;width:1116px;height:1px;background:#dad9df"></div>
<div style="left:1054px;top:138px;width:1px;height:412px;background:#e3e2e7"></div>
<div style="left:1055px;top:138px;width:1px;height:412px;background:#fafafb"></div>
<div style="left:1056px;top:138px;width:1px;height:412px;background:#dad9df"></div>
<div style="left:1054px;top:230px;width:3px;height:21px;background:#fdfdfd"></div>
<div style="left:1054px;top:231px;width:1px;height:1px;background:#55565c"></div>
<div style="left:1055px;top:231px;width:1px;height:1px;background:#8d8e96"></div>
<div style="left:1054px;top:232px;width:1px;height:1px;background:#777880"></div>
<div style="left:1054px;top:235px;width:1px;height:1px;background:#55565c"></div>
<div style="left:1055px;top:235px;width:1px;height:1px;background:#8d8e96"></div>
<div style="left:1054px;top:236px;width:1px;height:1px;background:#777880"></div>
<div style="left:1054px;top:239px;width:1px;height:1px;background:#55565c"></div>
<div style="left:1055px;top:239px;width:1px;height:1px;background:#8d8e96"></div>
<div style="left:1054px;top:240px;width:1px;height:1px;background:#777880"></div>
<div style="left:1054px;top:243px;width:1px;height:1px;background:#55565c"></div>
<div style="left:1055px;top:243px;width:1px;height:1px;background:#8d8e96"></div>
<div style="left:1054px;top:244px;width:1px;height:1px;background:#777880"></div>
<div style="left:1054px;top:247px;width:1px;height:1px;background:#55565c"></div>
<div style="left:1055px;top:247px;width:1px;height:1px;background:#8d8e96"></div>
<div style="left:1054px;top:248px;width:1px;height:1px;background:#777880"></div>
<div style="left:1054px;top:438px;width:3px;height:21px;background:#fdfdfd"></div>
<div style="left:1054px;top:439px;width:1px;height:1px;background:#55565c"></div>
<div style="left:1055px;top:439px;width:1px;height:1px;background:#8d8e96"></div>
<div style="left:1054px;top:440px;width:1px;height:1px;background:#777880"></div>
<div style="left:1054px;top:443px;width:1px;height:1px;background:#55565c"></div>
<div style="left:1055px;top:443px;width:1px;height:1px;background:#8d8e96"></div>
<div style="left:1054px;top:444px;width:1px;height:1px;background:#777880"></div>
<div style="left:1054px;top:447px;width:1px;height:1px;background:#55565c"></div>
<div style="left:1055px;top:447px;width:1px;height:1px;background:#8d8e96"></div>
<div style="left:1054px;top:448px;width:1px;height:1px;background:#777880"></div>
<div style="left:1054px;top:451px;width:1px;height:1px;background:#55565c"></div>
<div style="left:1055px;top:451px;width:1px;height:1px;background:#8d8e96"></div>
<div style="left:1054px;top:452px;width:1px;height:1px;background:#777880"></div>
<div style="left:1054px;top:455px;width:1px;height:1px;background:#55565c"></div>
<div style="left:1055px;top:455px;width:1px;height:1px;background:#8d8e96"></div>
<div style="left:1054px;top:456px;width:1px;height:1px;background:#777880"></div>
<div style="left:1055px;top:342px;width:21px;height:3px;background:#fdfdfd"></div>
<div style="left:1056px;top:343px;width:1px;height:1px;background:#55565c"></div>
<div style="left:1057px;top:343px;width:1px;height:1px;background:#777880"></div>
<div style="left:1056px;top:344px;width:1px;height:1px;background:#8d8e96"></div>
<div style="left:1060px;top:343px;width:1px;height:1px;background:#55565c"></div>
<div style="left:1061px;top:343px;width:1px;height:1px;background:#777880"></div>
<div style="left:1060px;top:344px;width:1px;height:1px;background:#8d8e96"></div>
<div style="left:1064px;top:343px;width:1px;height:1px;background:#55565c"></div>
<div style="left:1065px;top:343px;width:1px;height:1px;background:#777880"></div>
<div style="left:1064px;top:344px;width:1px;height:1px;background:#8d8e96"></div>
<div style="left:1068px;top:343px;width:1px;height:1px;background:#55565c"></div>
<div style="left:1069px;top:343px;width:1px;height:1px;background:#777880"></div>
<div style="left:1068px;top:344px;width:1px;height:1px;background:#8d8e96"></div>
<div style="left:1072px;top:343px;width:1px;height:1px;background:#55565c"></div>
<div style="left:1073px;top:343px;width:1px;height:1px;background:#777880"></div>
<div style="left:1072px;top:344px;width:1px;height:1px;background:#8d8e96"></div>
<div style="left:14px;top:562px;width:1625px;height:1px;background:#f9f9fa"></div>
<div style="left:14px;top:563px;width:1625px;height:1px;background:#ececef"></div>
<div style="left:14px;top:564px;width:1625px;height:1px;background:#dddde1"></div>
<div style="left:14px;top:565px;width:1625px;height:1px;background:#e9e9eb"></div>
<div style="left:816px;top:562px;width:21px;height:3px;background:#fdfdfd"></div>
<div style="left:817px;top:563px;width:1px;height:1px;background:#55565c"></div>
<div style="left:818px;top:563px;width:1px;height:1px;background:#777880"></div>
<div style="left:817px;top:564px;width:1px;height:1px;background:#8d8e96"></div>
<div style="left:821px;top:563px;width:1px;height:1px;background:#55565c"></div>
<div style="left:822px;top:563px;width:1px;height:1px;background:#777880"></div>
<div style="left:821px;top:564px;width:1px;height:1px;background:#8d8e96"></div>
<div style="left:825px;top:563px;width:1px;height:1px;background:#55565c"></div>
<div style="left:826px;top:563px;width:1px;height:1px;background:#777880"></div>
<div style="left:825px;top:564px;width:1px;height:1px;background:#8d8e96"></div>
<div style="left:829px;top:563px;width:1px;height:1px;background:#55565c"></div>
<div style="left:830px;top:563px;width:1px;height:1px;background:#777880"></div>
<div style="left:829px;top:564px;width:1px;height:1px;background:#8d8e96"></div>
<div style="left:833px;top:563px;width:1px;height:1px;background:#55565c"></div>
<div style="left:834px;top:563px;width:1px;height:1px;background:#777880"></div>
<div style="left:833px;top:564px;width:1px;height:1px;background:#8d8e96"></div>
<div style="left:16px;top:588px;width:1619px;height:100px;border:1px solid #8b8b90;background:#f0eeef;"></div>
<div style="left:19px;top:568px;width:75px;height:20px;border:1px solid #8b8b90;border-bottom:none;border-radius:3px 3px 0 0;background:#f0eeef;"></div>
<div class="t" style="left:27px;top:570px;height:19px;line-height:19px;letter-spacing:-0.271px;">House Detail</div>
<div style="left:97px;top:570px;width:82px;height:17px;border:1px solid #85878f;border-bottom:none;border-radius:2px 2px 0 0;background:linear-gradient(#f2f3f6 0%,#e4e6ec 35%,#c3c7d2 60%,#dfe2e9 100%);box-shadow:inset 1px 1px 0 #fff,inset -1px 0 0 #fff;"></div>
<div class="t" style="left:106px;top:572px;height:17px;line-height:17px;letter-spacing:-0.129px;color:#222">Transfer Price</div>
<div style="left:31px;top:600px;width:1592px;height:80px;border:1px solid #9b9ba0;background:#fff;"></div>
<div style="left:33px;top:602px;width:1590px;height:23px;background:linear-gradient(#e0e0e0 0%,#d6d6d6 50%,#c6c6c6 100%);"></div>
<div class="t" style="left:33px;top:602px;height:23px;line-height:23px;width:1590px;text-align:center;color:#585858;font-weight:bold;letter-spacing:0.3px">House Details</div>
<div style="left:33px;top:625px;width:1590px;height:23px;background:#7c7c84;"></div>
<div style="left:33px;top:648px;width:1590px;height:20px;background:#d3dbee;"></div>
<div style="left:33px;top:668px;width:17px;height:1px;background:#7c7c84;"></div>
<div style="left:34px;top:626px;width:15px;height:21px;background:linear-gradient(#ffffff 0%,#f6f6f8 50%,#dcdce3 100%);box-shadow:inset 1px 1px 0 #fff;"></div>
<div style="left:33px;top:648px;width:1px;height:20px;background:#7c7c84;"></div>
<div style="left:34px;top:648px;width:15px;height:20px;background:linear-gradient(#fdfdfd,#e4e4e8);"></div>
<div style="left:49px;top:648px;width:1px;height:20px;background:#7c7c84;"></div>
<svg style="left:38px;top:654px" width="8" height="10" viewBox="0 0 8 10"><path d="M1.5 1 L5.5 5 L1.5 9" stroke="#959cac" stroke-width="2.2" fill="none"/></svg>
<div style="left:50px;top:626px;width:111px;height:21px;background:linear-gradient(#ffffff 0%,#f6f6f8 50%,#dcdce3 100%);box-shadow:inset 1px 1px 0 #fff;"></div>
<div class="t" style="left:54px;top:627px;height:21px;line-height:21px;letter-spacing:-0.337px;">House No - Pen No</div>
<div style="left:50px;top:648px;width:111px;height:20px;background:#316ac5;"></div>
<div class="t" style="left:52px;top:648px;height:20px;line-height:20px;letter-spacing:-0.250px;color:#fff">02</div>
<svg style="left:150px;top:656px" width="8" height="6" viewBox="0 0 8 6"><path d="M0 1 L3.5 5.5 L7 1 Z" fill="#e8ecf4"/><path d="M0.8 0.6 L3.5 3.8 L6.2 0.6 Z" fill="#3a3a3a"/></svg>
<div style="left:162px;top:626px;width:94px;height:21px;background:linear-gradient(#ffffff 0%,#f6f6f8 50%,#dcdce3 100%);box-shadow:inset 1px 1px 0 #fff;"></div>
<div class="t" style="left:166px;top:627px;height:21px;line-height:21px;letter-spacing:-0.026px;">Catch Mortality</div>
<div style="left:162px;top:648px;width:94px;height:20px;background:#316ac5;"></div>
<div class="t" style="left:161px;top:648px;height:20px;line-height:20px;width:92px;text-align:right;letter-spacing:0;color:#fff">0</div>
<div style="left:257px;top:626px;width:40px;height:21px;background:linear-gradient(#ffffff 0%,#f6f6f8 50%,#dcdce3 100%);box-shadow:inset 1px 1px 0 #fff;"></div>
<div class="t" style="left:261px;top:627px;height:21px;line-height:21px;letter-spacing:-0.289px;">Age</div>
<div style="left:257px;top:648px;width:40px;height:20px;background:#316ac5;"></div>
<div class="t" style="left:256px;top:648px;height:20px;line-height:20px;width:38px;text-align:right;letter-spacing:-0.250px;color:#fff">31</div>
<div style="left:298px;top:626px;width:132px;height:21px;background:linear-gradient(#ffffff 0%,#f6f6f8 50%,#dcdce3 100%);box-shadow:inset 1px 1px 0 #fff;"></div>
<div class="t" style="left:302px;top:627px;height:21px;line-height:21px;letter-spacing:-0.022px;">Catch Mortality Weight</div>
<div style="left:298px;top:648px;width:132px;height:20px;background:#316ac5;"></div>
<div class="t" style="left:297px;top:648px;height:20px;line-height:20px;width:130px;text-align:right;letter-spacing:-0.141px;color:#fff">0.00</div>
<div style="left:431px;top:626px;width:72px;height:21px;background:linear-gradient(#ffffff 0%,#f6f6f8 50%,#dcdce3 100%);box-shadow:inset 1px 1px 0 #fff;"></div>
<div class="t" style="left:435px;top:627px;height:21px;line-height:21px;letter-spacing:-0.379px;">Farm Head</div>
<div style="left:431px;top:648px;width:72px;height:20px;background:#316ac5;"></div>
<div class="t" style="left:430px;top:648px;height:20px;line-height:20px;width:70px;text-align:right;letter-spacing:-0.133px;color:#fff">7,392</div>
<div style="left:504px;top:626px;width:82px;height:21px;background:linear-gradient(#ffffff 0%,#f6f6f8 50%,#dcdce3 100%);box-shadow:inset 1px 1px 0 #fff;"></div>
<div class="t" style="left:508px;top:627px;height:21px;line-height:21px;letter-spacing:-0.177px;">Farm Weight</div>
<div style="left:504px;top:648px;width:82px;height:20px;background:#316ac5;"></div>
<div class="t" style="left:503px;top:648px;height:20px;line-height:20px;width:80px;text-align:right;letter-spacing:-0.117px;color:#fff">12,400.00</div>
<div style="left:587px;top:626px;width:73px;height:21px;background:linear-gradient(#ffffff 0%,#f6f6f8 50%,#dcdce3 100%);box-shadow:inset 1px 1px 0 #fff;"></div>
<div class="t" style="left:591px;top:627px;height:21px;line-height:21px;letter-spacing:-0.271px;">Plant Head</div>
<div style="left:587px;top:648px;width:73px;height:20px;background:#316ac5;"></div>
<div class="t" style="left:586px;top:648px;height:20px;line-height:20px;width:71px;text-align:right;letter-spacing:-0.133px;color:#fff">7,255</div>
<div style="left:661px;top:626px;width:82px;height:21px;background:linear-gradient(#ffffff 0%,#f6f6f8 50%,#dcdce3 100%);box-shadow:inset 1px 1px 0 #fff;"></div>
<div class="t" style="left:665px;top:627px;height:21px;line-height:21px;letter-spacing:-0.107px;">Plant Weight</div>
<div style="left:661px;top:648px;width:82px;height:20px;background:#316ac5;"></div>
<div class="t" style="left:660px;top:648px;height:20px;line-height:20px;width:80px;text-align:right;letter-spacing:-0.117px;color:#fff">12,400.00</div>
<div style="left:744px;top:626px;width:74px;height:21px;background:linear-gradient(#ffffff 0%,#f6f6f8 50%,#dcdce3 100%);box-shadow:inset 1px 1px 0 #fff;"></div>
<div class="t" style="left:748px;top:627px;height:21px;line-height:21px;letter-spacing:0.000px;">Tgt Weight</div>
<div style="left:744px;top:648px;width:74px;height:20px;background:#316ac5;"></div>
<div class="t" style="left:743px;top:648px;height:20px;line-height:20px;width:72px;text-align:right;letter-spacing:-0.141px;color:#fff">0.00</div>
<div style="left:819px;top:626px;width:104px;height:21px;background:linear-gradient(#ffffff 0%,#f6f6f8 50%,#dcdce3 100%);box-shadow:inset 1px 1px 0 #fff;"></div>
<div class="t" style="left:823px;top:627px;height:21px;line-height:21px;letter-spacing:-0.039px;">Projected Weight</div>
<div style="left:819px;top:648px;width:104px;height:20px;background:#316ac5;"></div>
<div class="t" style="left:818px;top:648px;height:20px;line-height:20px;width:102px;text-align:right;letter-spacing:-0.141px;color:#fff">0.00</div>
<div style="left:924px;top:626px;width:80px;height:21px;background:linear-gradient(#ffffff 0%,#f6f6f8 50%,#dcdce3 100%);box-shadow:inset 1px 1px 0 #fff;"></div>
<div class="t" style="left:928px;top:627px;height:21px;line-height:21px;letter-spacing:-0.153px;">Max Density</div>
<div style="left:924px;top:648px;width:80px;height:20px;background:#316ac5;"></div>
<div class="t" style="left:923px;top:648px;height:20px;line-height:20px;width:78px;text-align:right;letter-spacing:-0.133px;color:#fff">39.27</div>
<div style="left:1005px;top:626px;width:111px;height:21px;background:linear-gradient(#ffffff 0%,#f6f6f8 50%,#dcdce3 100%);box-shadow:inset 1px 1px 0 #fff;"></div>
<div class="t" style="left:1009px;top:627px;height:21px;line-height:21px;letter-spacing:-0.244px;">Processing Density</div>
<div style="left:1005px;top:648px;width:111px;height:20px;background:#316ac5;"></div>
<div class="t" style="left:1004px;top:648px;height:20px;line-height:20px;width:109px;text-align:right;letter-spacing:-0.133px;color:#fff">39.27</div>
<div style="left:1117px;top:626px;width:76px;height:21px;background:linear-gradient(#ffffff 0%,#f6f6f8 50%,#dcdce3 100%);box-shadow:inset 1px 1px 0 #fff;"></div>
<div class="t" style="left:1121px;top:627px;height:21px;line-height:21px;letter-spacing:-0.447px;">Final Pickup</div>
<div style="left:1117px;top:648px;width:76px;height:20px;background:#316ac5;"></div>
<div style="left:1149px;top:652px;width:10px;height:10px;border:1px solid #9c9486;background:linear-gradient(135deg,#c9cfdb 15%,#f6f7f9 85%);box-shadow:inset 0 0 0 2px #fff;"></div>
<div style="left:1194px;top:626px;width:109px;height:21px;background:linear-gradient(#ffffff 0%,#f6f6f8 50%,#dcdce3 100%);box-shadow:inset 1px 1px 0 #fff;"></div>
<div class="t" style="left:1198px;top:627px;height:21px;line-height:21px;letter-spacing:-0.232px;">Placement Density</div>
<div style="left:1194px;top:648px;width:109px;height:20px;background:#316ac5;"></div>
<div class="t" style="left:1193px;top:648px;height:20px;line-height:20px;width:107px;text-align:right;letter-spacing:-0.133px;color:#fff">23.44</div>
<div style="left:1304px;top:626px;width:51px;height:21px;background:linear-gradient(#ffffff 0%,#f6f6f8 50%,#dcdce3 100%);box-shadow:inset 1px 1px 0 #fff;"></div>
<div class="t" style="left:1308px;top:627px;height:21px;line-height:21px;letter-spacing:-0.449px;">Cages</div>
<div style="left:1304px;top:648px;width:51px;height:20px;background:#316ac5;"></div>
<div class="t" style="left:1303px;top:648px;height:20px;line-height:20px;width:49px;text-align:right;letter-spacing:-0.133px;color:#fff">7,255</div>
<div style="left:1356px;top:626px;width:84px;height:21px;background:linear-gradient(#ffffff 0%,#f6f6f8 50%,#dcdce3 100%);box-shadow:inset 1px 1px 0 #fff;"></div>
<div class="t" style="left:1360px;top:627px;height:21px;line-height:21px;letter-spacing:-0.665px;">Sales SKU No</div>
<div style="left:1356px;top:648px;width:84px;height:20px;background:#316ac5;"></div>
<div style="left:1441px;top:626px;width:79px;height:21px;background:linear-gradient(#ffffff 0%,#f6f6f8 50%,#dcdce3 100%);box-shadow:inset 1px 1px 0 #fff;"></div>
<div class="t" style="left:1445px;top:627px;height:21px;line-height:21px;letter-spacing:-0.070px;">Contract No</div>
<div style="left:1441px;top:648px;width:79px;height:20px;background:#316ac5;"></div>
<div style="left:1521px;top:626px;width:102px;height:21px;background:linear-gradient(#ffffff 0%,#f6f6f8 50%,#dcdce3 100%);box-shadow:inset 1px 1px 0 #fff;"></div>
<div class="t" style="left:1525px;top:627px;height:21px;line-height:21px;letter-spacing:-0.077px;">Override Product</div>
<div style="left:1521px;top:648px;width:102px;height:20px;background:#316ac5;"></div>
</body></html>
